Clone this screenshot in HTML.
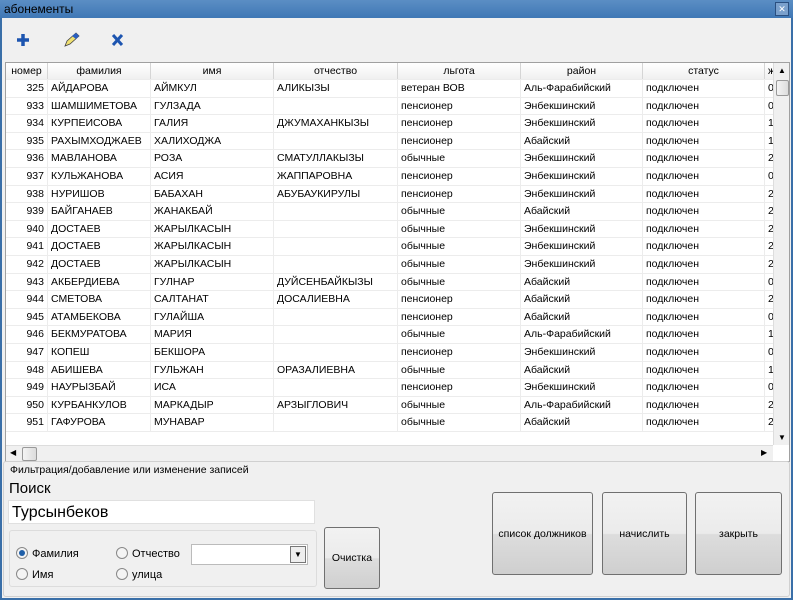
<!DOCTYPE html>
<html><head><meta charset="utf-8"><style>
body{margin:0;width:793px;height:600px;overflow:hidden;font-family:"Liberation Sans",sans-serif;font-size:11px;background:#3a6fa8;position:relative}
.title{position:absolute;left:0;top:0;width:793px;height:18px;background:linear-gradient(#5b8ec4,#3f77b5);color:#000}
.title span{position:absolute;left:4px;top:2px;font-size:12px}
.xb{position:absolute;right:4px;top:2px;width:12px;height:12px;border:1px solid #2a4f80;background:#7aa0cc;color:#fff;font-size:9px;text-align:center;line-height:12px}
.win{position:absolute;left:2px;top:18px;width:789px;height:580px;background:#f0f0f0}
.grid{position:absolute;left:5px;top:62px;width:783px;height:398px;background:#fff;border:1px solid #a0a0a0;overflow:hidden}
.row{position:absolute;left:0;height:17.6px;width:767px;border-bottom:1px solid #ececec;box-sizing:border-box}
.c{position:absolute;top:0;height:100%;line-height:16px;padding:0 3px;white-space:nowrap;overflow:hidden;border-right:1px solid #ececec;box-sizing:border-box;font-size:10.5px}
.h .c{text-align:center;border-right:1px solid #d5d5d5}
.h{background:linear-gradient(#fff,#f0f0f0);height:17px}
.n{text-align:right}
.vs{position:absolute;left:767px;top:0;width:16px;height:382px;background:#f0f0f0;border-left:1px solid #ddd}
.hs{position:absolute;left:0;top:382px;width:767px;height:16px;background:#f0f0f0;border-top:1px solid #ddd}
.thumb{position:absolute;background:linear-gradient(90deg,#f4f4f4,#dcdcdc);border:1px solid #999;border-radius:2px}
.btn{position:absolute;border:1px solid #707070;border-radius:3px;background:linear-gradient(#f2f2f2 0%,#ebebeb 50%,#dddddd 51%,#cfcfcf 100%);text-align:center;font-size:10.5px;display:flex;align-items:center;justify-content:center}
.rad{position:absolute;font-size:11px}
.rad i{display:inline-block;width:10px;height:10px;border:1px solid #888;border-radius:50%;background:#f4f4f4;vertical-align:-2px;margin-right:4px;position:relative}
.rad i.on::after{content:"";position:absolute;left:2px;top:2px;width:6px;height:6px;border-radius:50%;background:#1f5fa8}
</style></head><body>
<div class="title"><span>абонементы</span><div class="xb">✕</div></div>
<div class="win">
<svg style="position:absolute;left:15px;top:14px" width="110" height="16">
<path d="M6 2v12M0 8h12" stroke="#1d55b0" stroke-width="3.5"/>
<path d="M48 14l2-5 9-8 3 3-9 8z" fill="#f0e070" stroke="#444" stroke-width="0.8"/><path d="M55 4l4-3 3 3-3 3z" fill="#2a5fc0"/>
<path d="M96 3l9 10M105 3l-9 10" stroke="#1d55b0" stroke-width="3"/>
</svg>
</div>
<div class="grid" id="g">
<div class="vs"><div style="text-align:center;font-size:8px;margin-top:3px">▲</div><div class="thumb" style="left:2px;top:17px;width:11px;height:14px"></div><div style="position:absolute;bottom:3px;left:4px;font-size:8px">▼</div></div>
<div class="hs"><div style="position:absolute;left:4px;top:2px;font-size:8px">◀</div><div class="thumb" style="left:16px;top:1px;width:13px;height:12px"></div><div style="position:absolute;left:755px;top:2px;font-size:8px">▶</div></div>
</div>
<script>
var X=[0,42,145,268,392,515,637,759,768];
var H=["номер","фамилия","имя","отчество","льгота","район","статус","ж"];
var D=[["325","АЙДАРОВА","АЙМКУЛ","АЛИКЫЗЫ","ветеран ВОВ","Аль-Фарабийский","подключен","0"],
["933","ШАМШИМЕТОВА","ГУЛЗАДА","","пенсионер","Энбекшинский","подключен","0"],
["934","КУРПЕИСОВА","ГАЛИЯ","ДЖУМАХАНКЫЗЫ","пенсионер","Энбекшинский","подключен","1"],
["935","РАХЫМХОДЖАЕВ","ХАЛИХОДЖА","","пенсионер","Абайский","подключен","1"],
["936","МАВЛАНОВА","РОЗА","СМАТУЛЛАКЫЗЫ","обычные","Энбекшинский","подключен","2"],
["937","КУЛЬЖАНОВА","АСИЯ","ЖАППАРОВНА","пенсионер","Энбекшинский","подключен","0"],
["938","НУРИШОВ","БАБАХАН","АБУБАУКИРУЛЫ","пенсионер","Энбекшинский","подключен","2"],
["939","БАЙГАНАЕВ","ЖАНАКБАЙ","","обычные","Абайский","подключен","2"],
["940","ДОСТАЕВ","ЖАРЫЛКАСЫН","","обычные","Энбекшинский","подключен","2"],
["941","ДОСТАЕВ","ЖАРЫЛКАСЫН","","обычные","Энбекшинский","подключен","2"],
["942","ДОСТАЕВ","ЖАРЫЛКАСЫН","","обычные","Энбекшинский","подключен","2"],
["943","АКБЕРДИЕВА","ГУЛНАР","ДУЙСЕНБАЙКЫЗЫ","обычные","Абайский","подключен","0"],
["944","СМЕТОВА","САЛТАНАТ","ДОСАЛИЕВНА","пенсионер","Абайский","подключен","2"],
["945","АТАМБЕКОВА","ГУЛАЙША","","пенсионер","Абайский","подключен","0"],
["946","БЕКМУРАТОВА","МАРИЯ","","обычные","Аль-Фарабийский","подключен","1"],
["947","КОПЕШ","БЕКШОРА","","пенсионер","Энбекшинский","подключен","0"],
["948","АБИШЕВА","ГУЛЬЖАН","ОРАЗАЛИЕВНА","обычные","Абайский","подключен","1"],
["949","НАУРЫЗБАЙ","ИСА","","пенсионер","Энбекшинский","подключен","0"],
["950","КУРБАНКУЛОВ","МАРКАДЫР","АРЗЫГЛОВИЧ","обычные","Аль-Фарабийский","подключен","2"],
["951","ГАФУРОВА","МУНАВАР","","обычные","Абайский","подключен","2"]];
function row(v,top,cls){var s='<div class="row '+cls+'" style="top:'+top+'px">';for(var i=0;i<8;i++){s+='<div class="c'+(i==0&&cls==''?' n':'')+'" style="left:'+X[i]+'px;width:'+(X[i+1]-X[i])+'px">'+v[i]+'</div>';}return s+'</div>';}
var h=row(H,0,'h');for(var r=0;r<D.length;r++)h+=row(D[r],17+r*17.6,'');
document.getElementById('g').insertAdjacentHTML('afterbegin',h);
</script>
<div style="position:absolute;left:3px;top:461px;width:785px;height:134px;border:1px solid #d0d0d0;border-radius:3px;background:#f0f0f0"></div>
<div style="position:absolute;left:10px;top:464px;font-size:10.5px">Фильтрация/добавление или изменение записей</div>
<div style="position:absolute;left:9px;top:480px;font-size:15px">Поиск</div>
<div style="position:absolute;left:8px;top:500px;width:307px;height:24px;background:#fff;border:1px solid #e0e0e0;font-size:16px;line-height:24px;padding-left:3px;box-sizing:border-box">Турсынбеков</div>
<div style="position:absolute;left:9px;top:530px;width:306px;height:55px;border:1px solid #dcdcdc;border-radius:3px"></div>
<div class="rad" style="left:16px;top:547px"><i class="on"></i>Фамилия</div>
<div class="rad" style="left:16px;top:568px"><i></i>Имя</div>
<div class="rad" style="left:116px;top:547px"><i></i>Отчество</div>
<div class="rad" style="left:116px;top:568px"><i></i>улица</div>
<div style="position:absolute;left:191px;top:544px;width:115px;height:19px;background:#fff;border:1px solid #bbb"><div style="position:absolute;right:1px;top:1px;width:14px;height:15px;border:1px solid #777;background:#eee;font-size:8px;text-align:center;line-height:15px">▼</div></div>
<div class="btn" style="left:324px;top:527px;width:54px;height:60px">Очистка</div>
<div class="btn" style="left:492px;top:492px;width:99px;height:81px">список должников</div>
<div class="btn" style="left:602px;top:492px;width:83px;height:81px">начислить</div>
<div class="btn" style="left:695px;top:492px;width:85px;height:81px">закрыть</div>
</body></html>
